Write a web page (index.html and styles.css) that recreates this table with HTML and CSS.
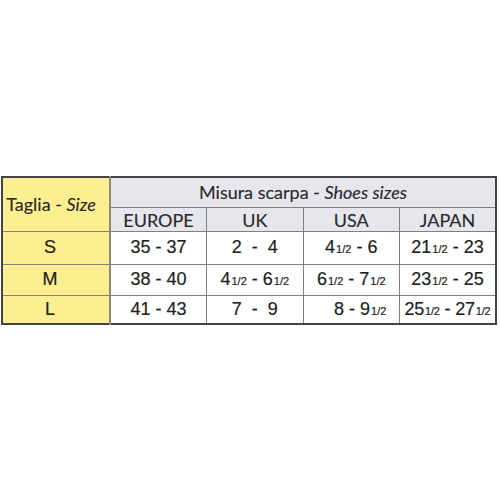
FILE: index.html
```html
<!DOCTYPE html>
<html>
<head>
<meta charset="utf-8">
<link rel="stylesheet" href="styles.css">
</head>
<body>
<div class="page">
<table class="sizes">
  <tr class="h1">
    <th class="taglia" rowspan="2">Taglia - <i>Size</i></th>
    <th class="misura" colspan="4">Misura scarpa - <i>Shoes sizes</i></th>
  </tr>
  <tr class="h2">
    <th class="c-eu">EUROPE</th>
    <th class="c-uk">UK</th>
    <th class="c-us">USA</th>
    <th class="c-jp">JAPAN</th>
  </tr>
  <tr class="r-s">
    <td class="sz">S</td>
    <td>35 - 37</td>
    <td>2&nbsp; - &nbsp;4</td>
    <td>4<small>1/2</small> - 6</td>
    <td>21<small>1/2</small> - 23</td>
  </tr>
  <tr class="r-m">
    <td class="sz">M</td>
    <td>38 - 40</td>
    <td>4<small>1/2</small> - 6<small>1/2</small></td>
    <td>6<small>1/2</small> - 7<small>1/2</small></td>
    <td>23<small>1/2</small> - 25</td>
  </tr>
  <tr class="r-l">
    <td class="sz">L</td>
    <td>41 - 43</td>
    <td>7&nbsp; - &nbsp;9</td>
    <td class="us-l">8 - 9<small>1/2</small></td>
    <td class="jp-l">25<small>1/2</small> - 27<small>1/2</small></td>
  </tr>
</table>
</div>
</body>
</html>
```
FILE: styles.css
```css
html, body {
  margin: 0;
  padding: 0;
  background: #fff;
}
.page {
  width: 500px;
  height: 500px;
  padding-top: 176px;
  padding-left: 1px;
  box-sizing: border-box;
}
.sizes {
  border-collapse: collapse;
  width: 496px;
  table-layout: fixed;
  border: 2px solid #444;
}
.sizes th, .sizes td {
  border: 1px solid #808080;
  padding: 0;
  text-align: center;
  vertical-align: middle;
  color: #1e1e1e;
}
.sizes th {
  font-family: "Lato", "Open Sans", sans-serif;
  font-weight: normal;
  font-size: 18px;
  background: #e5e7ed;
  color: #2a2a2a;
  -webkit-text-stroke: 0.15px #2a2a2a;
}
.sizes th i {
  font-style: italic;
}
.sizes th.taglia {
  background: #fdef91;
  width: 96px;
  border-right: 2px solid #8a8a7a;
  padding-right: 10px;
}
.c-eu { width: 99px; }
.c-uk { width: 96px; }
.c-us { width: 96px; }
.c-jp { width: 95px; }
.h1 { height: 30px; }
.h2 { height: 23px; }
.h2 th { padding-top: 1px; }
.r-s { height: 33px; }
.r-m { height: 31px; }
.r-l { height: 29px; }
.sizes td {
  font-family: "Liberation Sans", Arial, sans-serif;
  font-size: 18px;
  background: #fff;
  -webkit-text-stroke: 0.2px #1e1e1e;
}
.sizes td.sz {
  background: #fdef91;
  border-right: 2px solid #8a8a7a;
  padding-right: 12px;
}
.sizes td small {
  font-size: 11px;
  margin-left: 1px;
}
.sizes td.us-l { padding-left: 18px; }
.sizes td.jp-l { padding-left: 0; white-space: nowrap; letter-spacing: -0.2px; }
```
